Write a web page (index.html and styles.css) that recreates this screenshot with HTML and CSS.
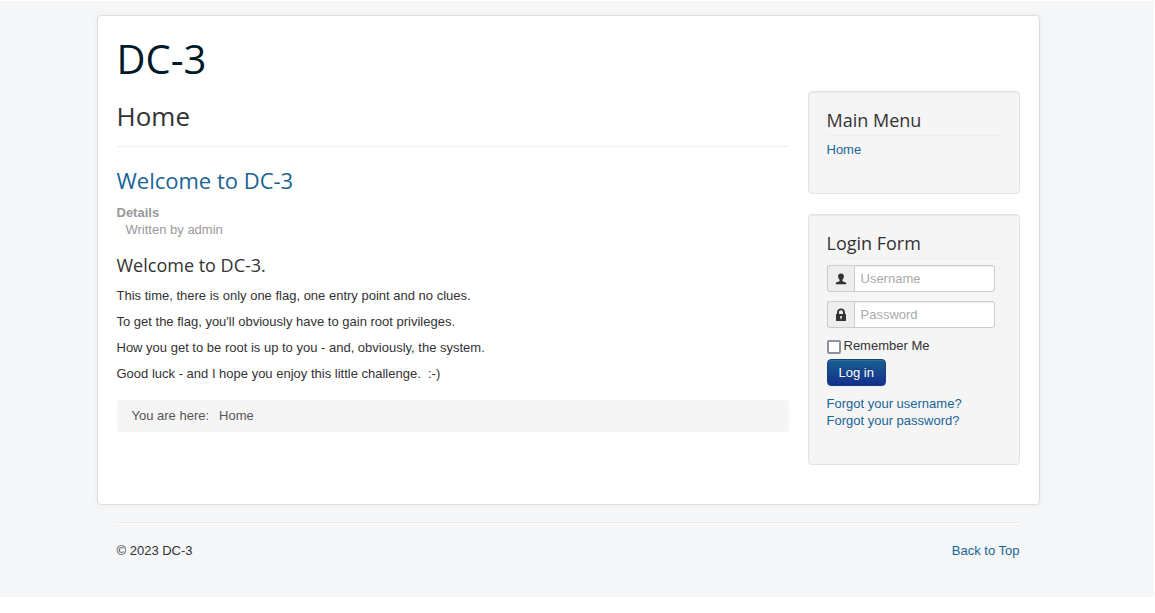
FILE: index.html
```html
<!DOCTYPE html>
<html lang="en">
<head>
<meta charset="utf-8">
<meta name="viewport" content="width=device-width, initial-scale=1">
<title>Home</title>
<link rel="stylesheet" href="styles.css">
</head>
<body>
<div class="site" id="top">
  <div class="container">
    <header class="header"><a class="brand" href="#">DC-3</a></header>
    <div class="columns">
      <main class="content">
        <h1 class="page-title">Home</h1>
        <article>
          <h2 class="item-title"><a href="#">Welcome to DC-3</a></h2>
          <dl class="info">
            <dt>Details</dt>
            <dd>Written by admin</dd>
          </dl>
          <h3 class="item-heading">Welcome to DC-3.</h3>
          <p>This time, there is only one flag, one entry point and no clues.</p>
          <p>To get the flag, you'll obviously have to gain root privileges.</p>
          <p>How you get to be root is up to you - and, obviously, the system.</p>
          <p>Good luck - and I hope you enjoy this little challenge.&nbsp; :-)</p>
        </article>
        <nav class="breadcrumb" aria-label="Breadcrumb">
          <span>You are here:</span>
          <span>Home</span>
        </nav>
      </main>
      <aside class="sidebar">
        <section class="well">
          <h3 class="well-title">Main Menu</h3>
          <nav><a href="#">Home</a></nav>
        </section>
        <section class="well">
          <h3 class="well-title">Login Form</h3>
          <form class="login">
            <div class="field">
              <label class="addon" for="username" aria-label="Username">
                <svg width="12" height="12" viewBox="0 0 12 12" aria-hidden="true"><path fill="#333" d="M6 0.4c1.9 0 2.9 1.2 2.9 2.9 0 1.5-.6 2.8-1.500 3.500v1.100c.5.5 1.400.8 2.400 1.100.9.3 1.400.8 1.500 2.200H.7c.1-1.400.6-1.900 1.500-2.200 1-.3 1.900-.6 2.400-1.100V6.800C3.700 6.100 3.100 4.800 3.100 3.300 3.100 1.600 4.100.4 6 .4z"/></svg>
              </label>
              <input id="username" type="text" placeholder="Username">
            </div>
            <div class="field">
              <label class="addon" for="password" aria-label="Password">
                <svg width="12" height="14" viewBox="0 0 12 14" aria-hidden="true"><path fill="#333" fill-rule="evenodd" d="M2 6V4.500C2 2.100 3.600.6 6 .6s4 1.500 4 3.900V6h.4c.4 0 .6.2.6.6v5.800c0 .4-.2.600-.6.600H1.600c-.4 0-.6-.2-.6-.6V6.600C1 6.200 1.200 6 1.600 6zM4 6h4V4.300C8 3 7.200 2.300 6 2.300S4 3 4 4.300zM6 8a1 1 0 0 0-.5 1.900V11.300h1V9.900A1 1 0 0 0 6 8z"/></svg>
              </label>
              <input id="password" type="password" placeholder="Password">
            </div>
            <div class="remember">
              <input id="remember" type="checkbox">
              <label for="remember">Remember Me</label>
            </div>
            <button class="btn" type="button">Log in</button>
            <ul class="links">
              <li><a href="#">Forgot your username?</a></li>
              <li><a href="#">Forgot your password?</a></li>
            </ul>
          </form>
        </section>
      </aside>
    </div>
  </div>
  <footer class="footer">
    <span>© 2023 DC-3</span>
    <a href="#top">Back to Top</a>
  </footer>
</div>
</body>
</html>
```
FILE: styles.css
```css
* { box-sizing: border-box; }
html { background: #fff; }
body {
  margin: 0;
  font: 13px/18px "Liberation Sans", Arial, sans-serif;
  color: #333;
}
h1, h2, h3 {
  margin: 0;
  font-family: "Open Sans", sans-serif;
  font-weight: 400;
}
a { color: #1a6496; text-decoration: none; }
a:hover { text-decoration: underline; }

.site {
  margin: 1px 1px 0 0;
  padding: 14px 37px 37px 19px;
  background: #f4f6f7;
}
.container {
  max-width: 943px;
  margin: 0 auto;
  padding: 19px 19px 39px;
  background: #fff;
  border: 1px solid #ddd;
  border-radius: 4px;
  box-shadow: 0 0 5px rgba(0, 0, 0, .05);
}
.header { margin-bottom: 8px; }
.brand {
  display: block;
  font: 40px/48px "Open Sans", sans-serif;
  color: #001a27;
}
.columns { display: flex; align-items: flex-start; gap: 19px; }
.content { flex: 1; min-width: 0; }
.sidebar { flex: 0 0 212px; }

.page-title {
  padding: 8px 0 12px;
  margin-bottom: 16px;
  font-size: 26px;
  line-height: 35px;
  border-bottom: 1px solid #eee;
}
.item-title {
  font-size: 22px;
  line-height: 34px;
  margin-bottom: 7px;
}
.info { margin: 0 0 16px; color: #999; line-height: 17px; }
.info dt { font-weight: 700; }
.info dd { margin: 0 0 0 9px; }
.item-heading { font-size: 18px; line-height: 22px; margin-bottom: 11px; }
.content p { margin: 0 0 8px; }
.breadcrumb {
  display: flex;
  gap: 10px;
  margin-top: 17px;
  padding: 7px 15px;
  color: #555;
  background: #f5f5f5;
  border-radius: 4px;
}

.well {
  padding: 18px;
  padding-bottom: 34px;
  margin-bottom: 20px;
  background: #f5f5f5;
  border: 1px solid #e3e3e3;
  border-radius: 4px;
  box-shadow: inset 0 1px 1px rgba(0, 0, 0, .05);
}
.well:last-child { margin-bottom: 0; }
.well-title {
  padding-bottom: 5px;
  font-size: 18px;
  line-height: 20px;
  margin-bottom: 5px;
  border-bottom: 1px solid #eee;
}
.login { padding: 1px 0; }
.field { display: flex; width: 168px; max-width: 100%; margin-bottom: 9px; }
.addon {
  display: flex;
  align-items: center;
  justify-content: center;
  width: 27px;
  background: #eee;
  border: 1px solid #ccc;
  border-right: 0;
  border-radius: 3px 0 0 3px;
}
.field input {
  flex: 1;
  min-width: 0;
  height: 27px;
  padding: 3px 6px;
  font: inherit;
  color: #555;
  background: #fff;
  border: 1px solid #ccc;
  border-radius: 0 3px 3px 0;
  box-shadow: inset 0 1px 1px rgba(0, 0, 0, .075);
}
.field input::placeholder { color: #aaa; opacity: 1; }
.remember { display: flex; align-items: center; gap: 3px; margin-bottom: 4px; }
.remember input {
  appearance: none;
  width: 14px;
  height: 14px;
  margin: 2px 0 0;
  background: #fff;
  border: 2px solid #8f8f9d;
  border-radius: 2px;
}
.remember input:checked { background: #1a6496; }
.btn {
  display: block;
  height: 27px;
  padding: 0 11px;
  font: inherit;
  color: #fff;
  text-shadow: 0 -1px 0 rgba(0, 0, 0, .25);
  background: linear-gradient(#1a5f91, #132f8c);
  border: 1px solid #16417f;
  border-radius: 4px;
  box-shadow: inset 0 1px 0 rgba(255, 255, 255, .1), 0 1px 2px rgba(0, 0, 0, .05);
}
.links { margin: 9px 0 0; padding: 0; list-style: none; line-height: 17px; }

.footer {
  display: flex;
  justify-content: space-between;
  max-width: 903px;
  margin: 17px auto 0;
  padding-top: 19px;
  border-top: 1px solid #e8e8e8;
  box-shadow: inset 0 1px 0 #fff;
}
```
